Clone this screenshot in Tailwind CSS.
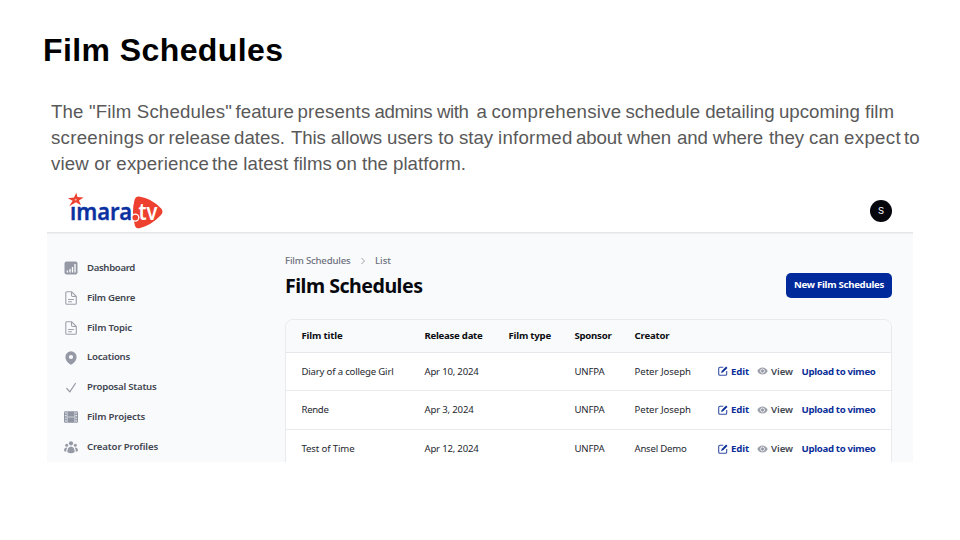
<!DOCTYPE html>
<html lang="en">
<head>
<meta charset="utf-8">
<title>Film Schedules</title>
<script src="https://cdn.jsdelivr.net/npm/@tailwindcss/browser@4"></script>
</head>
<body class="w-[960px] h-[540px] overflow-hidden bg-white">
<main class="flex flex-col h-full font-['Liberation_Sans',Arial,sans-serif]">
  <h1 class="pl-[43px] pt-[30px] h-[99px] text-[32px] leading-[40px] font-bold text-black whitespace-nowrap"><span data-w="240.5">Film Schedules</span></h1>
  <div class="pl-[51px] h-[88px] text-[18.67px] leading-[26px] text-[#595959] whitespace-nowrap">
    <div class="flex"><span class="w-[184.500px]"><span data-w="181">The "Film Schedules"</span></span> <span class="w-[62px]"><span data-w="58.500">feature</span></span> <span class="w-[77px]"><span data-w="73">presents</span></span> <span class="w-[102px]"><span data-w="94">admins with</span></span> <span class="w-[15px]">a</span> <span class="w-[134px]"><span data-w="130">comprehensive</span></span> <span class="w-[153.500px]"><span data-w="149">schedule detailing</span></span> <span data-w="115">upcoming film</span></div>
    <div class="flex"><span class="w-[97px]"><span data-w="93">screenings</span></span> <span class="w-[20.500px]">or</span> <span class="w-[65.500px]"><span data-w="62">release</span></span> <span class="w-[57px]"><span data-w="51">dates.</span></span> <span class="w-[96px]"><span data-w="91">This allows</span></span> <span class="w-[72px]"><span data-w="67">users to</span></span> <span class="w-[39px]"><span data-w="34">stay</span></span> <span class="w-[78px]"><span data-w="74.500">informed</span></span> <span class="w-[101px]"><span data-w="95">about when</span></span> <span class="w-[92px]"><span data-w="86">and where</span></span> <span class="w-[75px]"><span data-w="70">they can</span></span> <span class="w-[60px]"><span data-w="57">expect</span></span> <span>to</span></div>
    <div class="flex"><span class="w-[161px]"><span data-w="158">view or experience</span></span> <span class="w-[124px]"><span data-w="120">the latest films</span></span> <span class="w-[57px]"><span data-w="52">on the</span></span> <span data-w="73">platform.</span></div>
  </div>

  <section class="ml-[47px] w-[866px] h-[275px] overflow-hidden bg-[#f9fafc] font-['Noto_Sans',sans-serif] text-[9.6px] whitespace-nowrap">
    <header class="flex justify-between h-[46px] pl-[20px] pr-[21px] bg-white border-b border-[#e6e7ea] shadow-[0_1px_1px_#eff0f2]">
      <svg class="mt-[5px]" width="98" height="38" viewBox="0 0 98 38" aria-label="imara.tv">
        <path d="M9.300.8 10.500 5 16.600 5.500 12 8.400 13.900 13.300 9 10.300 2.200 14.200 5.600 8.800.8 6.300 7 5.400Z" fill="#ee4030"/>
        <path d="M8.500 6.500 10 7.500 8.900 8.800 7.400 8Z" fill="#f7a59b"/>
        <path d="M72 4.400Q85 6.200 94.200 16.600Q97 20 93.800 23.200Q84 33.400 72.500 36.200Q68.700 36.900 67.800 33.200Q64.200 20 67.600 7.800Q68.500 4.200 72 4.400Z" fill="#ee402e"/>
        <text x="3" y="27.600" textLength="62" lengthAdjust="spacingAndGlyphs" font-family="Noto Sans, sans-serif" font-size="23.500" font-weight="600" fill="#0b31a1" stroke="#0b31a1" stroke-width=".35">ımara</text>
        <circle cx="68.300" cy="25.600" r="3.500" fill="#ee402e" stroke="#fff" stroke-width="1.300"/>
        <text x="71.500" y="27.600" textLength="19" lengthAdjust="spacingAndGlyphs" font-family="Noto Sans, sans-serif" font-size="23.500" font-weight="600" fill="#fff">tv</text>
      </svg>
      <div class="mt-[13px] flex items-center justify-center w-[22px] h-[22px] rounded-full bg-[#05070d] text-white text-[9.500px] font-['Inter',sans-serif]">S</div>
    </header>

    <div class="flex">
      <nav class="w-[238px] pl-[17px] pt-[20px] font-semibold text-[#414650]">
        <a class="flex items-center h-[29.900px]"><svg class="mr-[9px]" width="14" height="14" viewBox="0 0 14 14"><rect x=".5" y=".5" width="13" height="13" rx="2" fill="#9599a6"/><path d="M3.400 9.500v2M6 8v3.500M8.500 6v5.500M11 3v8.500" stroke="#fff" stroke-width="1.300"/></svg><span data-w="48">Dashboard</span></a>
        <a class="flex items-center h-[29.900px]"><svg class="mr-[9px]" width="14" height="14" viewBox="0 0 14 14" fill="none" stroke="#9ca0aa" stroke-width="1.100" stroke-linejoin="round" stroke-linecap="round"><path d="M2.800.7H7.500L12.300 5.500V12.300Q12.300 13.300 11.300 13.300H2.800Q1.800 13.300 1.800 12.300V1.700Q1.800.7 2.800.7ZM7.500.7V4.300Q7.500 5.500 8.700 5.500H12.300M4.500 8.500H9.500M4.500 10.700H7.500"/></svg><span data-w="48">Film Genre</span></a>
        <a class="flex items-center h-[29.900px]"><svg class="mr-[9px]" width="14" height="14" viewBox="0 0 14 14" fill="none" stroke="#9ca0aa" stroke-width="1.100" stroke-linejoin="round" stroke-linecap="round"><path d="M2.800.7H7.500L12.300 5.500V12.300Q12.300 13.300 11.300 13.300H2.800Q1.800 13.300 1.800 12.300V1.700Q1.800.7 2.800.7ZM7.500.7V4.300Q7.500 5.500 8.700 5.500H12.300M4.500 8.500H9.500M4.500 10.700H7.500"/></svg><span data-w="45">Film Topic</span></a>
        <a class="flex items-center h-[29.900px]"><svg class="mr-[9px]" width="14" height="14" viewBox="0 0 14 14"><path fill-rule="evenodd" d="M7 .3A5.600 5.600 0 0 0 1.400 5.900C1.400 9.400 4.500 12.300 7 13.800 9.500 12.300 12.600 9.400 12.600 5.900A5.600 5.600 0 0 0 7 .3ZM7 3.900A2.100 2.100 0 1 1 7 8.100 2.100 2.100 0 0 1 7 3.900Z" fill="#9599a6"/></svg><span data-w="43">Locations</span></a>
        <a class="flex items-center h-[29.900px]"><svg class="mr-[9px]" width="14" height="14" viewBox="0 0 14 14"><path d="M2.800 7.500 5.800 10.800 11.400 2.500" fill="none" stroke="#9599a6" stroke-width="1.200" stroke-linecap="round" stroke-linejoin="round"/></svg><span data-w="69.500">Proposal Status</span></a>
        <a class="flex items-center h-[29.900px]"><svg class="mr-[9px]" width="14" height="14" viewBox="0 0 14 14"><rect y="1.200" width="14" height="11.600" rx="1.300" fill="#8f94a2"/><path d="M3.200 1.500V12.500M10.800 1.500V12.500M3.500 7H10.500" stroke="#e9ebf0" stroke-width=".7"/><path d="M1.700 2.500V12M12.300 2.500V12" stroke="#e9ebf0" stroke-width="1.500" stroke-dasharray="1.100 1.500"/></svg><span data-w="58">Film Projects</span></a>
        <a class="flex items-center h-[29.900px]"><svg class="mr-[9px]" width="14" height="14" viewBox="0 0 14 14" fill="#9599a6"><circle cx="7" cy="3.300" r="2.100"/><circle cx="2.700" cy="5.200" r="1.500"/><circle cx="11.300" cy="5.200" r="1.500"/><path d="M3.400 12.300C3.200 9 4.600 6.600 7 6.600S10.800 9 10.600 12.300Q7 14 3.400 12.300ZM.1 10.900C-.1 8.700 1 7.300 3.300 7.500 2.500 8.800 2.200 10.200 2.200 11.700Q1 11.600.1 10.900ZM13.900 10.900C14.100 8.700 13 7.300 10.700 7.500 11.500 8.800 11.800 10.200 11.800 11.700Q13 11.600 13.900 10.900Z"/></svg><span data-w="71">Creator Profiles</span></a>
      </nav>

      <div class="w-[607px] pt-[20px]">
        <div class="flex items-center h-[16px] font-medium text-[#6d717d]"><span data-w="65.500">Film Schedules</span><svg class="ml-[8px] mr-[8.500px]" width="8" height="8" viewBox="0 0 8 8"><path d="M2.500 1 5.500 4 2.500 7" fill="none" stroke="#9ca0aa" stroke-width="1"/></svg><span data-w="16">List</span></div>
        <div class="flex justify-between h-[50px]">
          <h2 class="mt-[3px] text-[19.600px] leading-[28px] font-bold text-[#07090f]"><span data-w="137.500">Film Schedules</span></h2>
          <button class="mt-[4px] flex items-center justify-center w-[106px] h-[25px] rounded-[5px] bg-[#00299b] text-white font-bold"><span data-w="90">New Film Schedules</span></button>
        </div>
        <div class="h-[150px] border border-[#e9eaed] rounded-t-[8px] bg-white overflow-hidden text-[#24272f]">
          <div class="grid grid-cols-[123px_84px_66px_60px_1fr] items-center h-[32.500px] pl-[15.500px] bg-[#f9fafb] border-b border-[#e6e7ea] font-bold text-[#0b0d12]"><div><span data-w="41">Film title</span></div><div><span data-w="58">Release date</span></div><div><span data-w="42.500">Film type</span></div><div><span data-w="37">Sponsor</span></div><div><span data-w="35">Creator</span></div></div>
          <div class="grid grid-cols-[123px_84px_66px_60px_83.500px_39px_44.500px_1fr] items-center h-[38.700px] pt-[1px] pl-[15.500px] border-b border-[#e9eaed]"><div><span data-w="92">Diary of a college Girl</span></div><div><span data-w="54">Apr 10, 2024</span></div><div></div><div><span data-w="30">UNFPA</span></div><div><span data-w="56.500">Peter Joseph</span></div>
            <div class="flex items-center gap-[3px] font-bold text-[#0b2e98]"><svg class="mb-[1px]" width="10" height="10" viewBox="0 0 10 10" fill="none"><path d="M5.300 1.300H2Q.7 1.300.7 2.600V8Q.7 9.300 2 9.300H7.400Q8.700 9.300 8.700 8V5" stroke="#354fa5" stroke-width="1.100"/><path d="M3.100 6.900 3.700 4.900 8.100.5 9.500 1.900 5.100 6.300Z" fill="#0b2e98"/></svg><span data-w="18">Edit</span></div>
            <div class="flex items-center gap-[3px] font-semibold text-[#414650]"><svg class="mb-[1px]" width="11" height="10" viewBox="0 0 11 10"><path d="M.3 5C2.400.3 8.600.3 10.700 5 8.600 9.700 2.400 9.700.3 5Z" fill="#9ca0aa"/><circle cx="5.500" cy="5" r="2" fill="#9599a6" stroke="#fff" stroke-width=".8"/></svg><span data-w="22">View</span></div><div class="font-bold text-[#0b2e98]"><span data-w="74">Upload to vimeo</span></div></div>
          <div class="grid grid-cols-[123px_84px_66px_60px_83.500px_39px_44.500px_1fr] items-center h-[38.700px] pt-[1px] pl-[15.500px] border-b border-[#e9eaed]"><div><span data-w="27">Rende</span></div><div><span data-w="49">Apr 3, 2024</span></div><div></div><div><span data-w="30">UNFPA</span></div><div><span data-w="56.500">Peter Joseph</span></div>
            <div class="flex items-center gap-[3px] font-bold text-[#0b2e98]"><svg class="mb-[1px]" width="10" height="10" viewBox="0 0 10 10" fill="none"><path d="M5.300 1.300H2Q.7 1.300.7 2.600V8Q.7 9.300 2 9.300H7.400Q8.700 9.300 8.700 8V5" stroke="#354fa5" stroke-width="1.100"/><path d="M3.100 6.900 3.700 4.900 8.100.5 9.500 1.900 5.100 6.300Z" fill="#0b2e98"/></svg><span data-w="18">Edit</span></div>
            <div class="flex items-center gap-[3px] font-semibold text-[#414650]"><svg class="mb-[1px]" width="11" height="10" viewBox="0 0 11 10"><path d="M.3 5C2.400.3 8.600.3 10.700 5 8.600 9.700 2.400 9.700.3 5Z" fill="#9ca0aa"/><circle cx="5.500" cy="5" r="2" fill="#9599a6" stroke="#fff" stroke-width=".8"/></svg><span data-w="22">View</span></div><div class="font-bold text-[#0b2e98]"><span data-w="74">Upload to vimeo</span></div></div>
          <div class="grid grid-cols-[123px_84px_66px_60px_83.500px_39px_44.500px_1fr] items-center h-[38.700px] pl-[15.500px]"><div><span data-w="53">Test of Time</span></div><div><span data-w="54">Apr 12, 2024</span></div><div></div><div><span data-w="30">UNFPA</span></div><div><span data-w="52">Ansel Demo</span></div>
            <div class="flex items-center gap-[3px] font-bold text-[#0b2e98]"><svg class="mb-[1px]" width="10" height="10" viewBox="0 0 10 10" fill="none"><path d="M5.300 1.300H2Q.7 1.300.7 2.600V8Q.7 9.300 2 9.300H7.400Q8.700 9.300 8.700 8V5" stroke="#354fa5" stroke-width="1.100"/><path d="M3.100 6.900 3.700 4.900 8.100.5 9.500 1.900 5.100 6.300Z" fill="#0b2e98"/></svg><span data-w="18">Edit</span></div>
            <div class="flex items-center gap-[3px] font-semibold text-[#414650]"><svg class="mb-[1px]" width="11" height="10" viewBox="0 0 11 10"><path d="M.3 5C2.400.3 8.600.3 10.700 5 8.600 9.700 2.400 9.700.3 5Z" fill="#9ca0aa"/><circle cx="5.500" cy="5" r="2" fill="#9599a6" stroke="#fff" stroke-width=".8"/></svg><span data-w="22">View</span></div><div class="font-bold text-[#0b2e98]"><span data-w="74">Upload to vimeo</span></div></div>
        </div>
      </div>
    </div>
  </section>
</main>
<script>
// Track each label so that it fills its intended measure.
function fitLabels() {
  document.querySelectorAll('[data-w]').forEach(el => {
    el.style.letterSpacing = '0px';
    const range = document.createRange();
    range.selectNodeContents(el);
    const natural = range.getBoundingClientRect().width;
    el.style.letterSpacing = (el.dataset.w - natural) / el.textContent.length + 'px';
  });
}
window.addEventListener('load', () => {
  fitLabels();
  requestAnimationFrame(fitLabels);
  document.fonts.ready.then(fitLabels);
});
new ResizeObserver(fitLabels).observe(document.querySelector('section'));
</script>
</body>
</html>
